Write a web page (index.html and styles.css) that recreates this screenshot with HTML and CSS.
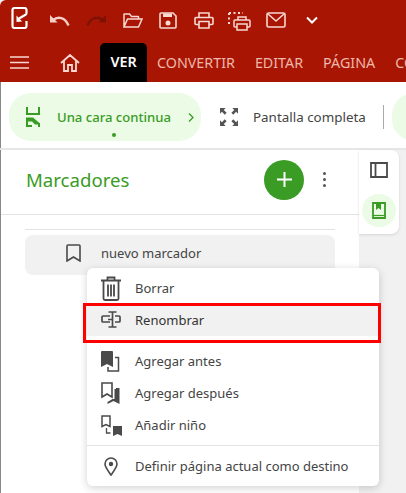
FILE: index.html
```html
<!DOCTYPE html>
<html lang="es">
<head>
  <meta charset="UTF-8" />
  <title>Marcadores</title>
  <link rel="stylesheet" href="styles.css">
</head>
<body>
  <!-- Title bar -->
  <div class="titlebar">
    <svg class="logo" width="17" height="22" viewBox="0 0 17 22"><path d="M15.500 14v5a2 2 0 0 1-2 2h-10a2 2 0 0 1-2-2V3a2 2 0 0 1 2-2h10a2 2 0 0 1 2 2v3a2 2 0 0 1-1 1.700L8 11.500" fill="none" stroke="#fff" stroke-width="2.200"/><path d="M5.500 8.500v6.500l5.500-.5z" fill="#fff"/></svg>
    <svg class="qa undo" width="20" height="11" viewBox="0 0 20 11"><path d="M0 0v7.500h7.500z" fill="#f5d0c8"/><path d="M3 5c5-4 12-3 15.500 5.500" fill="none" stroke="#f5d0c8" stroke-width="2.400"/></svg>
    <svg class="qa redo" width="20" height="11" viewBox="0 0 20 11"><path d="M20 0v7.500h-7.500z" fill="#7c1204"/><path d="M17 5C12 1 5 2 1.500 10.500" fill="none" stroke="#7c1204" stroke-width="2.400"/></svg>
    <svg class="qa open" width="20" height="15" viewBox="0 0 20 15"><path d="M1 14V1.500a.5.500 0 0 1 .5-.5h5l2 2.500h6.500a.5.500 0 0 1 .5.500V6M1 14l3.500-8h14.500l-3.500 8z" fill="none" stroke="#f7d8d2" stroke-width="1.500"/></svg>
    <svg class="qa save" width="18" height="17" viewBox="0 0 18 17"><path d="M1 2a1 1 0 0 1 1-1h12l3 3v11a1 1 0 0 1-1 1H2a1 1 0 0 1-1-1z" fill="none" stroke="#f7d8d2" stroke-width="1.600"/><path d="M4 1.500h9V5H4z" fill="#f7d8d2"/><circle cx="9" cy="11" r="2.500" fill="#f7d8d2"/></svg>
    <svg class="qa print" width="20" height="17" viewBox="0 0 20 17"><path d="M5 5.500V1h10v4.500M5 12.500H2a1 1 0 0 1-1-1V6.500a1 1 0 0 1 1-1h16a1 1 0 0 1 1 1v5a1 1 0 0 1-1 1h-3M5 9.500h10V16H5z" fill="none" stroke="#f7d8d2" stroke-width="1.600"/></svg>
    <svg class="qa batch" width="23" height="19" viewBox="0 0 23 19"><path d="M1 1h14M1 1v13" fill="none" stroke="#f7d8d2" stroke-width="2" stroke-dasharray="2 2.500"/><path d="M10 8V5h8v3M9 15H7a1 1 0 0 1-1-1V9a1 1 0 0 1 1-1h14a1 1 0 0 1 1 1v5a1 1 0 0 1-1 1h-2M9 12h10v6H9z" fill="none" stroke="#f7d8d2" stroke-width="1.500"/></svg>
    <svg class="qa mail" width="20" height="16" viewBox="0 0 20 16"><rect x="1" y="1" width="18" height="14" rx="1.500" fill="none" stroke="#f7d8d2" stroke-width="1.600"/><path d="M2 2l8 7 8-7" fill="none" stroke="#f7d8d2" stroke-width="1.600"/></svg>
    <svg class="qa more" width="12" height="8" viewBox="0 0 12 8"><path d="M1 1.500l5 5 5-5" fill="none" stroke="#fff" stroke-width="2"/></svg>
  </div>

  <!-- Tab row -->
  <div class="tabrow">
    <svg class="burger" width="19" height="13" viewBox="0 0 19 13"><path d="M0 1h19M0 6.500h19M0 12h19" stroke="#f7d8d2" stroke-width="1.600"/></svg>
    <svg class="home" width="20" height="18" viewBox="0 0 20 18"><path d="M1 9l9-8 9 8M4 7v10h4v-6h4v6h4V7" fill="none" stroke="#f7d8d2" stroke-width="1.800"/></svg>
    <div class="tab active">VER</div>
    <div class="tab">CONVERTIR</div>
    <div class="tab">EDITAR</div>
    <div class="tab">PÁGINA</div>
    <div class="tab">CO</div>
  </div>

  <!-- Ribbon -->
  <div class="ribbon">
    <div class="pill">
      <svg width="14" height="20" viewBox="0 0 14 20"><path d="M1 0v7h12V0M1 11v9M13 20v-4" fill="none" stroke="#3a9b25" stroke-width="2"/><path d="M0 10.500h7l7 6v1h-5l-3-3H0z" fill="#3a9b25"/><path d="M0 19h6" stroke="#3a9b25" stroke-width="2"/></svg>
      <span class="pill-text">Una cara continua</span>
      <svg width="6" height="9" viewBox="0 0 6 9"><path d="M1 .5l4 4-4 4" fill="none" stroke="#3a9b25" stroke-width="1.300"/></svg>
      <span class="pill-dot"></span>
    </div>
    <div class="ribbon-btn">
      <svg width="18" height="18" viewBox="0 0 19 19" fill="#555"><path d="M0 0h6L4 2l3 3-2 2-3-3-2 2zM19 0v6l-2-2-3 3-2-2 3-3-2-2zM0 19v-6l2 2 3-3 2 2-3 3 2 2zM19 19h-6l2-2-3-3 2-2 3 3 2-2z"/></svg>
      <span>Pantalla completa</span>
    </div>
    <div class="ribbon-sep"></div>
    <div class="pill-cut"></div>
  </div>

  <!-- Main area -->
  <div class="main">
    <div class="panel">
      <div class="panel-head">
        <h1>Marcadores</h1>
        <div class="add-btn"><svg width="15" height="15" viewBox="0 0 15 15"><path d="M7.500 0v15M0 7.500h15" stroke="#fff" stroke-width="2"/></svg></div>
        <div class="kebab"><i></i><i></i><i></i></div>
      </div>
      <div class="panel-body">
        <div class="bookmark-row">
          <svg width="15" height="18" viewBox="0 0 15 18"><path d="M1 17V2a1 1 0 0 1 1-1h11a1 1 0 0 1 1 1v15l-6.500-4z" fill="none" stroke="#4a4a4a" stroke-width="1.600"/></svg>
          <span>nuevo marcador</span>
        </div>
      </div>
    </div>
    <div class="sidetabs">
      <div class="sidetab"><svg width="18" height="16" viewBox="0 0 18 16"><path d="M1 1h16v14H1zM5.500 1v14" fill="none" stroke="#4a4a4a" stroke-width="1.800"/></svg></div>
      <div class="sidetab on"><svg width="14" height="17" viewBox="0 0 14 17"><path d="M1 1h12v15H1z" fill="none" stroke="#3a9b25" stroke-width="1.800"/><path d="M4 1h5v7L6.500 6 4 8z" fill="#3a9b25"/><path d="M1 13.500h12" stroke="#3a9b25" stroke-width="1.200"/></svg></div>
    </div>
  </div>

  <!-- Context menu -->
  <div class="menu">
    <div class="item item-borrar">
      <div class="ico"><svg width="20" height="25" viewBox="0 0 20 25"><path d="M0 4.500h20M6.500 4V1.500h7V4M2.500 5v17.500a1.500 1.500 0 0 0 1.500 1.500h12a1.500 1.500 0 0 0 1.500-1.500V5M7 8.500v12M10 8.500v12M13 8.500v12" fill="none" stroke="#4a4a4a" stroke-width="1.800"/></svg></div>
      <span>Borrar</span>
    </div>
    <div class="item item-rename">
      <div class="ico"><svg width="20" height="17" viewBox="0 0 20 17"><path d="M9 5H2a1 1 0 0 0-1 1v4a1 1 0 0 0 1 1h7M14 5h4a1 1 0 0 1 1 1v4a1 1 0 0 1-1 1h-4M11.500 1v15M7.500 1h8M7.500 16h8M7 8.500h5" fill="none" stroke="#4a4a4a" stroke-width="1.700"/></svg></div>
      <span>Renombrar</span>
    </div>
    <div class="item">
      <div class="ico"><svg width="19" height="21" viewBox="0 0 19 21"><path d="M0 1a1 1 0 0 1 1-1h10a1 1 0 0 1 1 1v15l-6-3-6 3z" fill="#4a4a4a"/><path d="M14 6.500h3.500V20H7v-4" fill="none" stroke="#4a4a4a" stroke-width="1.500"/></svg></div>
      <span>Agregar antes</span>
    </div>
    <div class="item">
      <div class="ico"><svg width="19" height="22" viewBox="0 0 19 22"><path d="M1 1h10v14l-5-3-5 3z" fill="none" stroke="#4a4a4a" stroke-width="1.600"/><path d="M13.500 7h1.500v-1h3.500v16l-6-3-6 3v-2l5-3h2z" fill="#4a4a4a"/></svg></div>
      <span>Agregar después</span>
    </div>
    <div class="item">
      <div class="ico"><svg width="21" height="21" viewBox="0 0 21 21"><path d="M1 1h8v10.500l-4-2-4 2z" fill="none" stroke="#4a4a4a" stroke-width="1.500"/><path d="M5.500 13v5h4" fill="none" stroke="#4a4a4a" stroke-width="1.300"/><path d="M12 11h9v10l-4.500-2-4.500 2z" fill="#4a4a4a"/></svg></div>
      <span>Añadir niño</span>
    </div>
    <div class="menu-sep"></div>
    <div class="item item-last">
      <div class="ico"><svg width="14" height="19" viewBox="0 0 14 19"><path d="M7 18C3.500 13 1 10 1 7a6 6 0 0 1 12 0c0 3-2.500 6-6 11z" fill="none" stroke="#4a4a4a" stroke-width="1.600"/><circle cx="7" cy="7" r="2.200" fill="#4a4a4a"/></svg></div>
      <span>Definir página actual como destino</span>
    </div>
  </div>
  <div class="callout"></div>
</body>
</html>
```

FILE: styles.css
```css
body {
  font-family: "Noto Sans", sans-serif;
  background: #f1f1f1;
  margin: 0;
  width: 406px;
  height: 493px;
  overflow: hidden;
  position: relative;
  color: #444;
}
svg {
  display: block;
  flex: none;
}
.titlebar {
  display: flex;
  align-items: center;
  height: 40px;
  background: #a81603;
  padding: 0 0 3px 11px;
  border-top-left-radius: 6px;
}
.logo {
  margin: -4px 22px 0 0;
}
.undo { margin-right: 16px; }
.redo { margin-right: 17px; }
.open { margin-right: 16px; }
.save { margin-right: 17px; }
.print { margin-right: 14px; }
.batch { margin: 2px 15px 0 0; }
.mail { margin-right: 20px; }
.tabrow {
  display: flex;
  align-items: center;
  height: 39px;
  background: #a81603;
  overflow: hidden;
  padding-left: 10px;
}
.burger {
  margin-right: 31px;
}
.home {
  margin-right: 20px;
}
.tab {
  font-size: 14.3px;
  color: #eeb7ab;
  margin-right: 20px;
  white-space: nowrap;
  flex: none;
}
.tab.active {
  background: #000;
  color: #fff;
  font-weight: 600;
  align-self: flex-end;
  height: 39px;
  width: 47px;
  line-height: 38px;
  text-align: center;
  border-radius: 5px 5px 0 0;
  margin-right: 10px;
}
.ribbon {
  display: flex;
  align-items: center;
  height: 66px;
  box-sizing: border-box;
  padding-top: 4px;
  background: #fff;
  border-left: 1px solid #888;
  overflow: hidden;
}
.pill {
  display: flex;
  align-items: center;
  position: relative;
  width: 192px;
  height: 48px;
  box-sizing: border-box;
  padding: 0 10px 0 17px;
  margin-left: 8px;
  background: #ebfbe5;
  border-radius: 22px;
  flex: none;
}
.pill-text {
  font-size: 13.1px;
  font-weight: 500;
  color: #3a9b25;
  margin: 0 17px 0 17px;
  white-space: nowrap;
}
.pill-dot {
  position: absolute;
  left: 103px;
  bottom: 4px;
  width: 4px;
  height: 4px;
  border-radius: 50%;
  background: #3a9b25;
}
.ribbon-btn {
  display: flex;
  align-items: center;
  gap: 15px;
  margin-left: 19px;
  font-size: 13.4px;
  color: #444;
  white-space: nowrap;
  flex: none;
}
.ribbon-sep {
  width: 1px;
  height: 24px;
  background: #aaa;
  margin-left: 17px;
  flex: none;
}
.pill-cut {
  width: 60px;
  height: 48px;
  background: #ebfbe5;
  border-radius: 22px;
  margin-left: 8px;
  flex: none;
}
.main {
  display: flex;
  align-items: flex-start;
  height: 345px;
  border-top: 2px solid #e6e6e6;
}
.panel {
  width: 358px;
  height: 343px;
  background: #fff;
  border-left: 1px solid #888;
  flex: none;
}
.panel-head {
  display: flex;
  align-items: center;
  height: 65px;
  box-sizing: border-box;
  padding: 0 33px 5px 25px;
  border-bottom: 1px solid #e4e4e4;
}
.panel-head h1 {
  flex: 1;
  margin: 0;
  font-size: 18.6px;
  font-weight: 400;
  color: #3a9b25;
}
.add-btn {
  display: flex;
  align-items: center;
  justify-content: center;
  width: 40px;
  height: 40px;
  border-radius: 50%;
  background: #3a9b25;
  margin-right: 19px;
}
.kebab {
  display: flex;
  flex-direction: column;
  gap: 3px;
}
.kebab i {
  display: block;
  width: 3px;
  height: 3px;
  border-radius: 50%;
  background: #555;
}
.panel-body {
  margin: 14px 24px 0;
  padding-top: 5px;
  border-top: 1px solid #e4e4e4;
}
.bookmark-row {
  display: flex;
  align-items: center;
  height: 40px;
  box-sizing: border-box;
  padding: 0 0 4px 41px;
  background: #f1f1f1;
  border-radius: 8px;
  gap: 20px;
  font-size: 13px;
}
.sidetabs {
  width: 40px;
  height: 84px;
  background: #fff;
  border-radius: 0 8px 8px 0;
  box-shadow: 0 1px 3px rgba(0, 0, 0, 0.12);
  display: flex;
  flex-direction: column;
  align-items: center;
  padding-top: 3px;
  box-sizing: border-box;
}
.sidetab {
  display: flex;
  align-items: center;
  justify-content: center;
  width: 34px;
  height: 34px;
  border-radius: 50%;
  margin-bottom: 7px;
}
.sidetab.on {
  background: #ebfbe5;
}
.menu {
  position: absolute;
  left: 87px;
  top: 268px;
  width: 292px;
  height: 218px;
  background: #fff;
  border-radius: 6px;
  box-shadow: 0 2px 8px rgba(0, 0, 0, 0.18);
}
.item {
  display: flex;
  align-items: center;
  height: 32px;
  padding-left: 14px;
  font-size: 13px;
  color: #444;
}
.ico {
  width: 34px;
  flex: none;
}
.item span {
  white-space: nowrap;
}
.item-borrar {
  height: 30px;
  padding-top: 5px;
}
.item-rename {
  height: 33px;
  margin-bottom: 9px;
  background: #f1f1f1;
  color: #333;
}
.menu-sep {
  height: 1px;
  background: #e4e4e4;
  margin-top: 4px;
}
.item-last {
  height: 40px;
}
.item-last .ico svg {
  margin-left: 3px;
}
.callout {
  position: absolute;
  left: 83px;
  top: 303px;
  width: 292px;
  height: 34px;
  border: 3px solid #f00;
}
```
